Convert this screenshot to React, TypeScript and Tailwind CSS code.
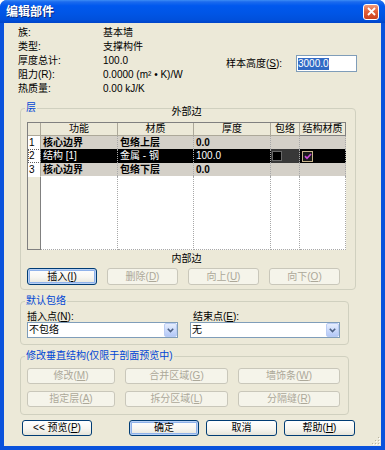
import React from "react";

const btnBase =
  "h-full flex items-center justify-center rounded-[3px] border text-[10px] leading-none";
const btnOn =
  "border-[#003C74] bg-[linear-gradient(180deg,#FFFFFF_0%,#F7F6F1_55%,#E6E4DA_100%)] text-black";
const btnOff = "border-[#C9C7BA] bg-[#F5F4EA] text-[#ACA899]";
const btnFocus =
  "border-[#003C74] bg-[linear-gradient(180deg,#FFFFFF_0%,#F7F6F1_55%,#E6E4DA_100%)] text-black shadow-[inset_0_0_0_1px_#B9D1F5,inset_0_0_0_2px_#8FB2EA]";

function Btn({
  children,
  w,
  kind = "on",
}: {
  children: React.ReactNode;
  w: string;
  kind?: "on" | "off" | "focus";
}) {
  const k = kind === "on" ? btnOn : kind === "off" ? btnOff : btnFocus;
  return <div className={`${btnBase} ${k} ${w}`}>{children}</div>;
}

function Group({
  label,
  className,
  children,
}: {
  label: string;
  className: string;
  children: React.ReactNode;
}) {
  return (
    <div
      className={`relative border border-[#D0D0BF] rounded-[4px] ml-[16px] ${className}`}
    >
      <span className="absolute top-[-7px] left-[4px] px-[1px] bg-[#ECE9D8] text-[#0046D5] leading-[12px]">
        {label}
      </span>
      {children}
    </div>
  );
}

function Select({ w, text }: { w: string; text: string }) {
  return (
    <div
      className={`${w} h-[16px] border border-[#7F9DB9] bg-white flex items-center`}
    >
      <span className="flex-1 pl-[1px] leading-[14px]">{text}</span>
      <div className="w-[13px] h-[14px] mr-[0px] rounded-[2px] border border-[#BACCF4] bg-[linear-gradient(180deg,#E6EEFD_0%,#C7D7FA_60%,#B3C8F6_100%)] flex items-center justify-center">
        <svg width="7" height="5" viewBox="0 0 7 5">
          <polyline
            points="0.8,0.8 3.5,3.6 6.2,0.8"
            fill="none"
            stroke="#4D6185"
            strokeWidth="1.6"
          />
        </svg>
      </div>
    </div>
  );
}

const cols = "grid grid-cols-[13px_77px_76px_77px_29px_46px]";
const dataCell = "border-r border-dotted border-[#A8A8A8] pl-[2px] overflow-hidden whitespace-nowrap";

export default function App() {
  return (
    <div className="w-[385px] h-[450px] flex flex-col bg-[#0A52DC] rounded-t-[7px] overflow-hidden text-[10px] leading-none text-black [font-family:'Liberation_Sans','Noto_Sans_CJK_SC',sans-serif]">
      {/* Title bar */}
      <div className="h-[23px] shrink-0 flex items-center justify-between pl-[6px] pr-[6px] bg-[linear-gradient(180deg,#3D8DF5_0%,#1C6BEE_8%,#0058EE_25%,#0055E5_60%,#0050DC_85%,#0044C8_100%)]">
        <span className="text-white font-bold text-[12px] [text-shadow:1px_1px_0_#0A2A7A]">
          编辑部件
        </span>
        <div className="w-[16px] h-[16px] rounded-[3px] border border-white bg-[linear-gradient(180deg,#F09A7C_0%,#E2613A_45%,#C9411E_100%)] flex items-center justify-center">
          <svg width="9" height="9" viewBox="0 0 9 9">
            <path d="M1 1 L8 8 M8 1 L1 8" stroke="white" strokeWidth="1.8" />
          </svg>
        </div>
      </div>

      {/* Body */}
      <div className="relative flex-1 mx-[4px] mb-[4px] bg-[#ECE9D8] flex flex-col">
        {/* Info */}
        <div className="flex pl-[14px] pt-[3px]">
          <div className="w-[208px] grid grid-cols-[85px_1fr] auto-rows-[14px] leading-[14px]">
            <span>族:</span>
            <span>基本墙</span>
            <span>类型:</span>
            <span>支撑构件</span>
            <span>厚度总计:</span>
            <span>100.0</span>
            <span>阻力(R):</span>
            <span>0.0000 (m² • K)/W</span>
            <span>热质量:</span>
            <span>0.00 kJ/K</span>
          </div>
          <div className="self-start mt-[29px] h-[17px] flex items-center">
            <span className="w-[70px]">
              样本高度(<span className="underline">S</span>):
            </span>
            <div className="w-[61px] h-[17px] border border-[#7F9DB9] bg-white flex items-center pl-[1px]">
              <span className="bg-[#316AC5] text-white leading-[12px]">3000.0</span>
            </div>
          </div>
        </div>

        {/* Layer group */}
        <Group label="层" className="mt-[12px] w-[336px] pl-[6px] pb-[4px]">
          <div className="-mt-[3px] h-[16px] leading-[12px] w-[319px] text-center">外部边</div>
          <div className="w-[319px] h-[128px] flex flex-col border-l border-t border-[#808080] bg-white">
            {/* header */}
            <div className={`${cols} h-[13px] leading-[12px]`}>
              <div className="bg-[#ECE9D8] border-r border-b border-[#ACA899]"></div>
              <div className="bg-[#ECE9D8] border-r border-b border-[#ACA899] text-center">功能</div>
              <div className="bg-[#ECE9D8] border-r border-b border-[#ACA899] text-center">材质</div>
              <div className="bg-[#ECE9D8] border-r border-b border-[#ACA899] text-center">厚度</div>
              <div className="bg-[#ECE9D8] border-r border-b border-[#ACA899] text-center">包络</div>
              <div className="bg-[#ECE9D8] border-r border-b border-[#808080] text-center">结构材质</div>
            </div>
            {/* row 1 */}
            <div className={`${cols} h-[13px] leading-[13px]`}>
              <div className="bg-white border-r border-[#ACA899] pl-[1px]">1</div>
              <div className={`${dataCell} bg-[#D4D0C8] font-bold`}>核心边界</div>
              <div className={`${dataCell} bg-[#D4D0C8] font-bold`}>包络上层</div>
              <div className={`${dataCell} bg-[#D4D0C8] font-bold`}>0.0</div>
              <div className={`${dataCell} bg-[#D4D0C8]`}></div>
              <div className={`${dataCell} bg-[#D4D0C8]`}></div>
            </div>
            {/* row 2 */}
            <div className={`${cols} h-[14px] leading-[14px]`}>
              <div className="bg-white border-r border-[#ACA899] pl-[1px] outline-1 outline-dotted outline-[#606060] -outline-offset-1">2</div>
              <div className={`${dataCell} bg-black text-white`}>结构 [1]</div>
              <div className={`${dataCell} bg-black text-white`}>金属 - 钢</div>
              <div className={`${dataCell} bg-black text-white`}>100.0</div>
              <div className="border-r border-dotted border-[#A8A8A8] bg-[#383838] flex items-center pl-[1px]">
                <div className="w-[10px] h-[10px] bg-black border border-[#6A6A6A]"></div>
              </div>
              <div className="border-r border-dotted border-[#A8A8A8] bg-black flex items-center pl-[2px]">
                <div className="w-[11px] h-[11px] bg-[#1A1A1A] border border-[#C8B48C] flex items-center justify-center">
                  <svg width="8" height="7" viewBox="0 0 8 7">
                    <polyline points="1,3.2 3,5.3 7,1" fill="none" stroke="#C84BD8" strokeWidth="1.7" />
                  </svg>
                </div>
              </div>
            </div>
            {/* row 3 */}
            <div className={`${cols} h-[13px] leading-[13px]`}>
              <div className="bg-white border-r border-[#ACA899] pl-[1px]">3</div>
              <div className={`${dataCell} bg-[#D4D0C8] font-bold`}>核心边界</div>
              <div className={`${dataCell} bg-[#D4D0C8] font-bold`}>包络下层</div>
              <div className={`${dataCell} bg-[#D4D0C8] font-bold`}>0.0</div>
              <div className={`${dataCell} bg-[#D4D0C8]`}></div>
              <div className={`${dataCell} bg-[#D4D0C8]`}></div>
            </div>
            {/* filler */}
            <div className={`${cols} flex-1`}>
              <div className="bg-[#ECE9D8] border-r border-b border-[#808080] border-t border-t-[#FFFFFF]"></div>
              <div className="border-r border-b border-dotted border-[#A8A8A8]"></div>
              <div className="border-r border-b border-dotted border-[#A8A8A8]"></div>
              <div className="border-r border-b border-dotted border-[#A8A8A8]"></div>
              <div className="border-r border-b border-dotted border-[#A8A8A8]"></div>
              <div className="border-r border-b border-dotted border-[#A8A8A8]"></div>
            </div>
          </div>
          <div className="h-[18px] leading-[18px] w-[319px] text-center">内部边</div>
          <div className="h-[17px] flex gap-[10px]">
            <Btn w="w-[70px]" kind="focus">
              插入(<span className="underline">I</span>)
            </Btn>
            <Btn w="w-[71px]" kind="off">
              删除(<span className="underline">D</span>)
            </Btn>
            <Btn w="w-[71px]" kind="off">
              向上(<span className="underline">U</span>)
            </Btn>
            <Btn w="w-[71px]" kind="off">
              向下(<span className="underline">O</span>)
            </Btn>
          </div>
        </Group>

        {/* Default wrapping */}
        <Group label="默认包络" className="mt-[11px] w-[329px] pl-[6px] pt-[9px] pb-[6px]">
          <div className="flex gap-[12px]">
            <div className="flex flex-col">
              <span className="h-[11px] leading-[11px]">
                插入点(<span className="underline">N</span>):
              </span>
              <Select w="w-[151px]" text="不包络" />
            </div>
            <div className="flex flex-col">
              <span className="h-[11px] leading-[11px] pl-[3px]">
                结束点(<span className="underline">E</span>):
              </span>
              <Select w="w-[150px]" text="无" />
            </div>
          </div>
        </Group>

        {/* Modify vertical structure */}
        <Group
          label="修改垂直结构(仅限于剖面预览中)"
          className="mt-[11px] w-[329px] pl-[6px] pt-[11px] pb-[7px]"
        >
          <div className="flex flex-col gap-[7px]">
            <div className="h-[16px] flex gap-[10px]">
              <Btn w="w-[88px]" kind="off">
                修改(<span className="underline">M</span>)
              </Btn>
              <Btn w="w-[103px]" kind="off">
                合并区域(<span className="underline">G</span>)
              </Btn>
              <Btn w="w-[102px]" kind="off">
                墙饰条(<span className="underline">W</span>)
              </Btn>
            </div>
            <div className="h-[16px] flex gap-[10px]">
              <Btn w="w-[88px]" kind="off">
                指定层(<span className="underline">A</span>)
              </Btn>
              <Btn w="w-[103px]" kind="off">
                拆分区域(<span className="underline">L</span>)
              </Btn>
              <Btn w="w-[102px]" kind="off">
                分隔缝(<span className="underline">R</span>)
              </Btn>
            </div>
          </div>
        </Group>

        {/* Bottom buttons */}
        <div className="mt-[5px] h-[16px] pl-[18px] flex">
          <Btn w="w-[70px]">
            &lt;&lt; 预览(<span className="underline">P</span>)
          </Btn>
          <div className="w-[37px]"></div>
          <Btn w="w-[70px]" kind="focus">
            确定
          </Btn>
          <div className="w-[7px]"></div>
          <Btn w="w-[71px]">取消</Btn>
          <div className="w-[7px]"></div>
          <Btn w="w-[71px]">
            帮助(<span className="underline">H</span>)
          </Btn>
        </div>

        {/* size grip */}
        <svg
          className="absolute right-[1px] bottom-[1px]"
          width="10"
          height="10"
          viewBox="0 0 10 10"
        >
          {[
            [8, 2],
            [5, 5],
            [8, 5],
            [2, 8],
            [5, 8],
            [8, 8],
          ].map(([x, y], i) => (
            <g key={i}>
              <rect x={x + 1} y={y + 1} width="1" height="1" fill="#FFFFFF" />
              <rect x={x} y={y} width="1" height="1" fill="#B8B4A2" />
            </g>
          ))}
        </svg>
      </div>
    </div>
  );
}
